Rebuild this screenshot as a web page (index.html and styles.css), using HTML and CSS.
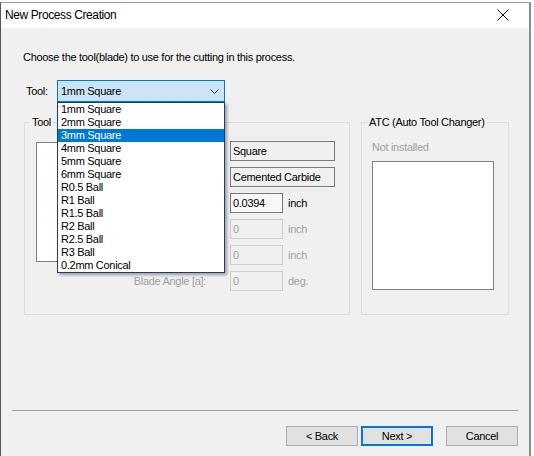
FILE: index.html
```html
<!DOCTYPE html>
<html>
<head>
<meta charset="utf-8">
<title>New Process Creation</title>
<link rel="stylesheet" href="styles.css">
</head>
<body>
<div class="window">
  <div class="titlebar">
    <span class="title">New Process Creation</span>
    <svg class="close" width="12" height="12" viewBox="0 0 12 12"><path d="M0.5 0.5 L11.5 11.5 M11.5 0.5 L0.5 11.5" stroke="#000" stroke-width="1" fill="none"/></svg>
  </div>
  <div class="content">
    <p class="intro">Choose the tool(blade) to use for the cutting in this process.</p>
    <div class="tool-row">
      <span class="tool-label">Tool:</span>
      <div class="combo">
        <span class="combo-text">1mm Square</span>
        <svg class="chevron" width="9" height="5" viewBox="0 0 9 5"><path d="M0.5 0.5 L4.5 4.5 L8.5 0.5" stroke="#333" stroke-width="1" fill="none"/></svg>
        <ul class="dropdown">
          <li>1mm Square</li>
          <li>2mm Square</li>
          <li class="selected">3mm Square</li>
          <li>4mm Square</li>
          <li>5mm Square</li>
          <li>6mm Square</li>
          <li>R0.5 Ball</li>
          <li>R1 Ball</li>
          <li>R1.5 Ball</li>
          <li>R2 Ball</li>
          <li>R2.5 Ball</li>
          <li>R3 Ball</li>
          <li>0.2mm Conical</li>
        </ul>
      </div>
    </div>
    <div class="groups">
      <fieldset class="group tool-group">
        <legend>Tool</legend>
        <div class="tool-inner">
          <div class="listbox"></div>
          <div class="fields">
            <div class="field-row"><span class="flabel"></span><span class="box ro wide">Square</span></div>
            <div class="field-row"><span class="flabel"></span><span class="box ro wide">Cemented Carbide</span></div>
            <div class="field-row"><span class="flabel"></span><span class="box edit">0.0394</span><span class="unit">inch</span></div>
            <div class="field-row"><span class="flabel"></span><span class="box off">0</span><span class="unit off-text">inch</span></div>
            <div class="field-row"><span class="flabel"></span><span class="box off">0</span><span class="unit off-text">inch</span></div>
            <div class="field-row"><span class="flabel off-text">Blade Angle [a]:</span><span class="box off">0</span><span class="unit off-text">deg.</span></div>
          </div>
        </div>
      </fieldset>
      <fieldset class="group atc-group">
        <legend>ATC (Auto Tool Changer)</legend>
        <div class="atc-inner">
          <div class="note off-text">Not installed</div>
          <div class="atc-box"></div>
        </div>
      </fieldset>
    </div>
    <div class="sep"></div>
    <div class="buttons">
      <button class="btn">&lt; Back</button>
      <button class="btn default">Next &gt;</button>
      <button class="btn cancel">Cancel</button>
    </div>
  </div>
</div>
</body>
</html>
```
FILE: styles.css
```css
html, body {
  margin: 0;
  padding: 0;
  background: #ffffff;
  overflow: hidden;
}
body {
  font-family: "Liberation Sans", Arial, sans-serif;
  font-size: 11px;
  letter-spacing: -0.3px;
  color: #000;
}
.window {
  margin-top: 2px;
  width: 528px;
  height: 453px;
  border-top: 1px solid #9a9a9a;
  border-left: 1px solid #555;
  border-right: 2px solid #8c8c8c;
  background: #f0f0f0;
  overflow: hidden;
}
.titlebar {
  height: 25px;
  background: #fff;
  display: flex;
  align-items: center;
  justify-content: space-between;
  padding: 0 20px 0 4px;
}
.title {
  font-size: 12px;
  letter-spacing: -0.4px;
  margin-top: -1px;
}
.close {
  display: block;
  margin-top: -2px;
}
.content {
  display: flex;
  flex-direction: column;
}
.intro {
  margin: 22px 0 0 22px;
  line-height: 14px;
}
.tool-row {
  margin: 16px 0 0 25px;
  display: flex;
  align-items: center;
  height: 22px;
}
.tool-label {
  width: 31px;
}
.combo {
  position: relative;
  width: 168px;
  height: 22px;
  box-sizing: border-box;
  border: 1px solid #0078d7;
  background: #cce4f7;
  display: flex;
  align-items: center;
  justify-content: space-between;
  padding: 0 5px 0 3px;
}
.chevron {
  display: block;
}
.dropdown {
  position: absolute;
  top: 21px;
  left: -1px;
  width: 168px;
  box-sizing: border-box;
  margin: 0;
  padding: 0;
  list-style: none;
  background: #fff;
  border: 1px solid #1e3f66;
  box-shadow: 2px 2px 3px rgba(0, 0, 0, 0.35);
  z-index: 10;
}
.dropdown li {
  height: 13px;
  line-height: 13px;
  padding-left: 3px;
}
.dropdown li.selected {
  background: #0078d7;
  color: #fff;
}
.groups {
  margin: 13px 0 0 23px;
  display: flex;
  gap: 11px;
  height: 200px;
}
.group {
  margin: 0;
  padding: 0;
  min-width: 0;
  border: 1px solid #dcdcdc;
  box-sizing: border-box;
}
.group legend {
  margin-left: 5px;
  padding: 0 2px;
  line-height: 14px;
}
.tool-group {
  width: 326px;
}
.atc-group {
  width: 148px;
}
.tool-inner {
  display: flex;
  padding: 12px 0 0 11px;
}
.listbox {
  width: 84px;
  height: 120px;
  margin-top: 1px;
  box-sizing: border-box;
  background: #fff;
  border: 1px solid #828282;
}
.fields {
  margin-left: 4px;
  display: flex;
  flex-direction: column;
  gap: 6px;
}
.field-row {
  display: flex;
  align-items: center;
  height: 20px;
}
.flabel {
  width: 82px;
  margin-right: 24px;
  text-align: right;
}
.box {
  box-sizing: border-box;
  width: 53px;
  height: 20px;
  line-height: 18px;
  padding-left: 2px;
  border: 1px solid #7a7a7a;
  background: #f0f0f0;
}
.box.wide {
  width: 105px;
}
.box.edit {
  background: #f7f7f7;
}
.box.off {
  border-color: #cccccc;
  color: #a0a0a0;
}
.unit {
  margin-left: 5px;
}
.off-text {
  color: #a0a0a0;
}
.atc-inner {
  padding: 11px 0 0 10px;
}
.note {
  line-height: 14px;
}
.atc-box {
  margin-top: 7px;
  width: 122px;
  height: 129px;
  box-sizing: border-box;
  background: #fff;
  border: 1px solid #828282;
}
.sep {
  margin: 95px 11px 0 11px;
  height: 0;
  border-top: 1px solid #a0a0a0;
}
.buttons {
  margin-top: 15px;
  padding-right: 11px;
  display: flex;
  justify-content: flex-end;
}
.btn {
  width: 72px;
  height: 20px;
  box-sizing: border-box;
  margin: 0;
  padding: 0;
  font-family: "Liberation Sans", Arial, sans-serif;
  font-size: 11px;
  letter-spacing: -0.3px;
  color: #000;
  background: #e1e1e1;
  border: 1px solid #adadad;
}
.btn.default {
  margin-left: 3px;
  border: 2px solid #0078d7;
}
.btn.cancel {
  margin-left: 13px;
}
```
